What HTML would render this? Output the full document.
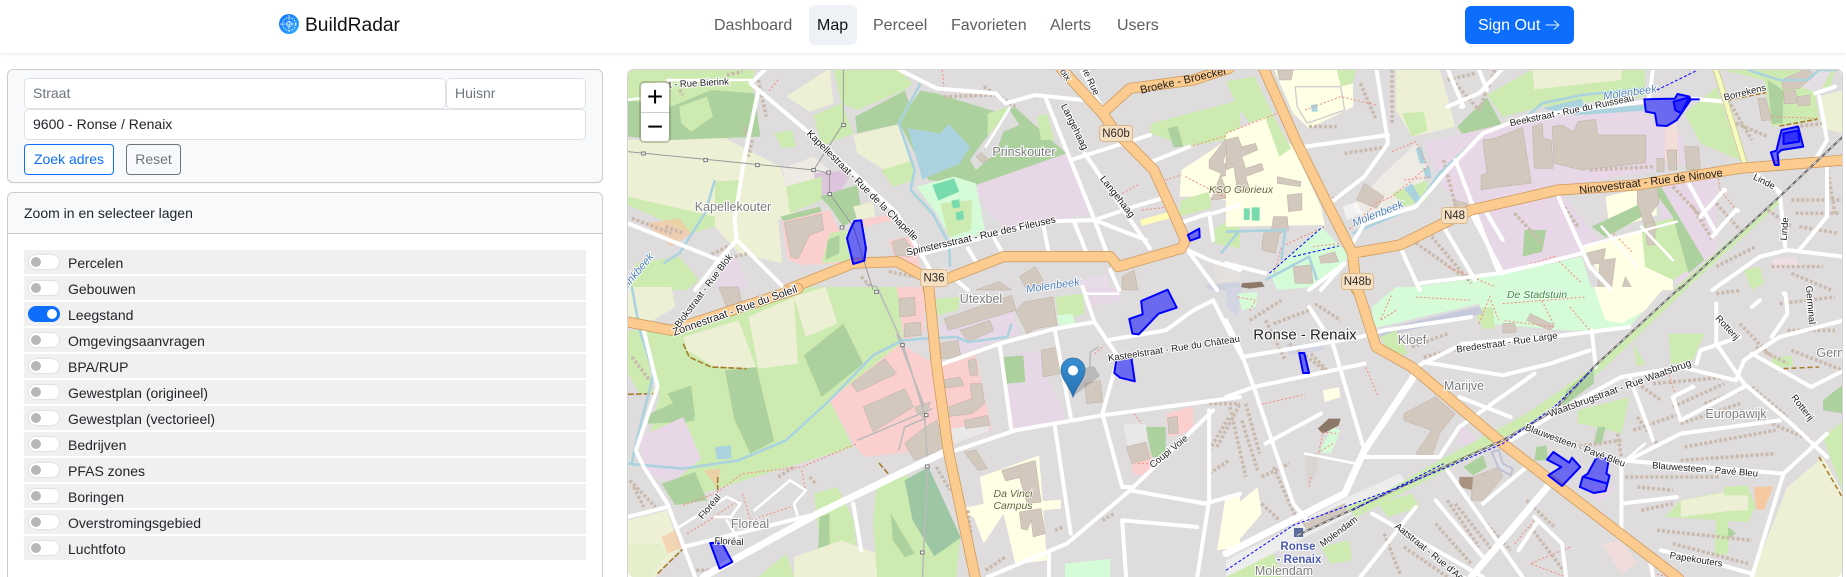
<!DOCTYPE html>
<html lang="nl"><head><meta charset="utf-8"><title>BuildRadar</title>
<style>
html,body{margin:0;padding:0;background:#fff;width:1846px;height:577px;overflow:hidden}
body{position:relative;font-family:"Liberation Sans",sans-serif;color:#212529}
#wrap{position:absolute;left:0;top:0;width:1846px;height:577px;overflow:hidden;contain:paint}
.a{position:absolute;box-sizing:border-box;white-space:nowrap}
.nav{left:0;top:0;width:1846px;height:53px;background:#fff;box-shadow:0 1px 4px rgba(0,0,0,.1)}
.nl{top:14px;font-size:16px;line-height:24px;color:#5c5f63}
.inp{background:#fff;border:1px solid #dee2e6;border-radius:5px;font-size:14px;line-height:28px;padding-left:8px;color:#6c757d}
.row{left:24px;width:562px;height:24px;background:#f0f0f0;font-size:14px;line-height:26px;padding-left:44px;color:#212529}
.sw{position:absolute;left:4px;top:4px;width:32px;height:16px;border-radius:8px;background:#fff;border:1px solid #dee2e6;box-sizing:border-box}
.sw i{position:absolute;left:2px;top:2px;width:10px;height:10px;border-radius:50%;background:#b7b7b7}
.on{background:#0d6efd;border-color:#0d6efd}.on i{left:18px;background:#fff}
svg.m{position:absolute;left:0;top:0;clip-path:inset(70px 4px 0 628px round 6px)}
svg.m *{vector-effect:non-scaling-stroke}
.w{fill:none;stroke:#fff;stroke-width:4;stroke-linecap:round;stroke-linejoin:round}
.t{fill:none;stroke:#fff;stroke-width:2.6;stroke-linecap:round;stroke-linejoin:round}
.b{fill:none;stroke:#fff;stroke-width:7;stroke-linecap:round;stroke-linejoin:round}
.oc{fill:none;stroke:#cf9b5c;stroke-width:11;stroke-linejoin:round;stroke-linecap:round}
.o{fill:none;stroke:#fbcb90;stroke-width:9.4;stroke-linejoin:round;stroke-linecap:round}
.wa{fill:none;stroke:#aad3df;stroke-width:2.6;stroke-linejoin:round}
.p{fill:none;stroke:#f58a7c;stroke-width:1;stroke-dasharray:2 2}
.r1{fill:none;stroke:#c9baad;stroke-width:3.5;stroke-dasharray:3 2}
.bd{fill:#d3c8bd;stroke:#bdafa3;stroke-width:.5}
.bl{fill:#0000ff;fill-opacity:.52;stroke:#0000ff;stroke-width:2;stroke-linejoin:round}
.rl{fill:none;stroke:#6f6f6f;stroke-width:2}
.bd2{fill:none;stroke:#0000ff;stroke-width:1;stroke-dasharray:3 2}
.f{fill:#add19e}.g{fill:#cdebb0}.y{fill:#eef0d5}.l{fill:#e8d7e6}.k{fill:#fccfcf}.h{fill:#d5fbd9}.s{fill:#ffffe5}
text{font-family:"Liberation Sans",sans-serif;text-anchor:middle;dominant-baseline:central}
.rt{font-size:10px;fill:#1c1c1c;paint-order:stroke;stroke:#fff;stroke-width:2px}
.pl{font-size:12.5px;fill:#7c7c7c;paint-order:stroke;stroke:#fff;stroke-width:2px}
.wt{font-size:11px;font-style:italic;fill:#4f7fb8;paint-order:stroke;stroke:#fff;stroke-width:1.6px}
.it{font-size:10.5px;font-style:italic;fill:#66662a;paint-order:stroke;stroke:#fff;stroke-width:1.4px}
.sh{font-size:11.5px;fill:#2c2c2c}
</style></head><body>
<div id="wrap">

<svg class="m" width="1846" height="577" viewBox="0 0 1846 577">
<rect x="620" y="60" width="1226" height="517" fill="#dfdcdd"/>

<!-- T3 areas -->
<g transform="translate(620 0) scale(.3954 .3333)">
<path class="y" d="M20 420L250 405L405 500L440 640L400 660L410 790L300 760L240 680L20 590Z"/>
<path class="g" d="M20 205L340 205L330 400L250 410L130 420L20 410Z"/>
<path class="f" d="M20 300L130 320L230 270L340 280L355 410L130 420L20 410Z"/>
<path class="g" d="M150 320L220 290L235 350L180 395L155 370Z"/>
<path class="g" d="M240 545L300 540L300 640L240 610Z"/>
<path class="g" d="M20 590L240 650L240 680L180 700L20 615Z"/>
<path class="g" d="M390 400L435 390L445 440L410 445Z"/>
<path fill="#f4c9a2" opacity=".75" d="M65 670L150 655L180 700L130 740Z"/>
<path class="g" d="M40 790L150 770L200 840L170 870L20 870Z"/>
<path class="l" d="M255 790L295 770L325 870L245 870Z"/>
<path class="y" d="M420 290L530 205L540 310L480 335Z"/>
<path class="g" d="M490 345L560 310L590 400L510 440Z"/>
<path class="g" d="M540 205L700 205L740 250L720 270L600 330L560 310Z"/>
<path class="f" d="M595 350L720 272L745 350L705 372L600 400Z"/>
<path class="y" d="M590 405L710 372L740 490L670 510L600 460Z"/>
<path class="g" d="M660 510L740 482L745 540L690 560Z"/>
<path fill="#eeebe5" d="M410 505L490 470L530 510L490 540L420 560Z"/>
<path fill="#dcc5dc" d="M490 520L590 510L560 570L500 590Z"/>
<path class="g" d="M420 560L510 530L510 600L430 640Z"/>
<path class="f" d="M505 590L600 555L612 640L565 680L530 620Z"/>
<path class="y" d="M590 620L640 605L645 650L600 660Z"/>
<path class="f" d="M405 650L505 620L510 635L415 665Z"/>
<path class="k" d="M410 665L530 630L560 705L575 790L460 795L425 780Z"/>
<path class="k" d="M600 660L680 645L690 660L620 680Z"/>
<path class="g" d="M530 700L575 690L590 782L510 790Z"/>
<path class="f" d="M525 720L555 705L555 760L520 780Z"/>
<path class="k" d="M680 720L740 710L760 800L700 795Z"/>
<path class="f" d="M705 365L760 272L800 280L950 335L1000 322L1095 425L1130 460L900 555L780 540Z"/>
<path class="g" d="M930 340L985 320L975 360L930 415Z"/>
<path class="g" d="M1055 350L1080 340L1100 420L1065 420Z"/>
<path fill="#dfdcdd" d="M925 415L985 330L1010 375L970 395L950 460L900 510L885 480Z"/>
<path fill="#aad3df" d="M728 385L810 400L832 372L885 440L860 490L780 530L765 540Z"/>
<path class="l" d="M895 560L1130 460L1195 640L1080 665L985 690L930 630Z"/>
<path class="h" d="M750 560L845 530L900 550L925 700L840 722L800 640Z"/>
<path class="g" d="M810 610L890 600L888 690L830 712Z"/>
<path fill="#77dbae" d="M790 555L845 535L858 575L805 602Z"/>
<path fill="#77dbae" d="M838 602L858 598L860 622L842 625ZM848 638L868 632L870 658L852 662Z"/>
<path class="g" d="M1345 370L1568 300L1568 410L1440 440L1340 400Z"/>
<path class="f" d="M1385 385L1410 378L1425 440L1400 442Z"/>
<path class="s" d="M1420 510L1568 395L1568 610L1490 590L1415 590Z"/>
<path class="g" d="M1420 600L1490 575L1495 625L1410 650Z"/>
<path class="g" d="M1500 690L1568 640L1568 745L1500 730Z"/>
<path class="bd" d="M1490 480L1530 420L1568 405L1568 420L1535 440L1525 490L1568 500L1568 520L1520 530L1535 575L1568 570L1568 590L1495 600L1520 520L1490 505Z"/>
<path class="bd" d="M415 668L510 642L515 690L480 705L450 778L432 770Z"/>
<path class="bd" d="M688 725L720 715L738 745L735 770L695 765Z"/>
<path class="bd" d="M900 470L915 458L932 478L918 490Z"/>
<path fill="#e4e0de" d="M1500 800L1568 780L1568 870L1520 870Z"/>
<path fill="#e8dcea" d="M1160 840L1230 825L1240 870L1170 870Z"/>
<path fill="#cdd0dd" d="M1480 855L1568 845L1568 870L1490 870Z"/>
<path class="bd" d="M1270 830L1300 810L1310 870L1270 870Z"/>
<path class="bd" d="M900 870L960 845L990 870ZM1010 830L1050 800L1080 860L1030 870Z"/>
<path class="r1" d="M150 270L160 285M270 225L310 215M335 420L325 470M315 380L320 410M350 240L370 350M220 770L280 735M30 655L130 700M115 680L160 700M820 290L950 285M920 260L1000 320M290 770L325 760M610 830L640 868M680 815L745 830"/>
<path class="p" d="M400 240L375 275M815 210L820 270M1440 440L1568 395M1380 540L1420 525M1270 580L1310 555M1320 630L1395 620M1430 530L1560 610"/>
<path fill="#fffcb8" d="M1315 660L1400 632L1405 650L1320 678Z"/>
</g>

<!-- T4 areas -->
<g transform="translate(1226 0) scale(.3954 .3333)">
<path class="g" d="M0 245L72 230L130 370L100 435L30 320Z"/>
<path class="s" d="M0 400L100 352L172 445L240 620L250 675L0 680Z"/>
<path class="g" d="M100 355L130 370L165 445L135 470Z"/>
<path class="s" d="M120 205L320 205L322 320L210 385L170 340Z"/>
<path class="g" d="M280 205L330 205L320 250L290 260Z"/>
<path class="y" d="M430 205L540 205L580 380L470 410L430 330Z"/>
<path class="g" d="M445 340L500 335L510 392L470 410Z"/>
<path class="g" d="M660 285L780 205L1060 205L1060 290L800 320L700 350Z"/>
<path class="y" d="M775 205L1000 205L1000 240L780 268Z"/>
<path class="f" d="M585 380L660 292L700 380L620 440Z"/>
<path fill="#aad3df" d="M800 325L900 295L905 325L1060 315L1060 332L900 350Z"/>
<path class="l" d="M500 430L760 355L1060 332L1090 380L1150 400L1170 490L600 620L550 560Z"/>
<path fill="#f3ddd8" d="M1110 380L1140 370L1145 490L1110 490Z"/>
<path class="g" d="M1160 340L1240 262L1300 480L1200 430Z"/>
<path class="g" d="M1240 205L1540 205L1530 260L1490 280L1500 360L1380 380L1360 240Z"/>
<path class="f" d="M1370 240L1410 272L1408 370L1380 372Z"/>
<path class="y" d="M1500 290L1560 270L1560 400L1505 382Z"/>
<path fill="#e4dfe2" d="M1400 240L1470 205L1530 215L1500 280Z"/>
<path class="l" d="M620 640L840 570L960 740L760 800L700 810Z"/>
<path class="l" d="M1090 560L1240 530L1240 770L1160 870L1130 830Z"/>
<path class="s" d="M900 740L1140 660L1130 780L1130 870L970 870Z"/>
<path class="s" d="M960 590L1085 555L1090 645L970 690Z"/>
<path class="f" d="M925 680L1050 610L1052 650L960 712Z"/>
<path class="g" d="M1050 680L1140 650L1210 780L1130 840L1060 800Z" />
<path class="f" d="M1080 570L1100 560L1210 780L1170 820L1130 650Z"/>
<path class="f" d="M755 690L810 690L800 755L750 770Z"/>
<path class="h" d="M425 870L690 825L900 770L925 870Z"/>
<path class="h" d="M110 820L240 680L290 740L320 760L230 860L130 870Z"/>
<path fill="#eeebe5" d="M320 620L400 520L480 430L510 500L480 620L350 660Z"/>
<path fill="#fff" opacity=".6" d="M295 620L330 605L345 640L305 660Z"/>
<path class="g" d="M420 580L510 540L510 600L450 620Z"/>
<path fill="#aad3df" d="M450 565L470 550L495 600L480 610ZM480 445L495 440L505 490L490 490ZM498 505L515 500L520 535L505 535Z"/>
<path class="g" d="M1310 810L1350 800L1360 850L1330 870Z"/>
<path class="g" d="M1130 870L1400 590L1410 600L1160 870Z"/>
<path fill="#ffdff0" opacity=".5" d="M1380 780L1440 770L1450 800L1390 810Z"/>
<path fill="none" stroke="#cfcfcf" stroke-width="1.4" d="M175 260L290 260L300 330L205 370L180 320Z"/>
<path fill="#aad3df" d="M215 315L230 312L232 335L217 335Z"/>
<path fill="#77dbae" d="M45 625H60V660H45ZM65 622H85V662H65Z"/>
<path class="bd" d="M650 420L680 415L750 382L772 550L682 562L645 570L645 525L660 520Z"/>
<path class="bd" d="M775 380L800 370L802 415L822 420L828 505L780 505Z"/>
<path class="bd" d="M825 380L850 375L880 395L890 365L935 358L940 405L1062 405L1062 488L900 510L830 490Z"/>
<path class="bd" d="M1115 450L1140 450L1140 510L1120 510ZM1160 440L1195 440L1200 510L1165 510ZM1090 475L1108 475L1108 515L1090 515Z"/>
<path class="bd" d="M1345 295L1365 295L1380 360L1355 362Z"/>
<path class="bd" d="M1410 275L1440 270L1445 310L1412 312ZM1445 290L1475 285L1478 315L1448 318Z"/>
<path class="bd" d="M1405 240L1470 205L1490 225L1450 265L1410 270Z"/>
<path class="bd" d="M0 420L30 410L40 440L75 430L80 450L40 470L50 505L90 490L95 510L50 530L60 570L30 580L20 500L0 510Z"/>
<path class="bd" d="M130 530L190 545L188 560L130 550ZM155 585L192 580L192 630L158 635ZM120 650L155 650L158 690L135 700L125 760L90 750L95 700L115 690Z"/>
<path class="bd" d="M575 600L610 610L620 650L580 640Z"/>
<path class="bd" d="M350 550L400 590L380 625L330 600Z"/>
<path class="bd" d="M130 210L170 210L165 240L135 240Z"/>
<path class="bd" d="M1040 560L1090 555L1095 610L1075 640L1090 690L1060 680L1040 610Z"/>
<path class="bd" d="M1060 670L1085 665L1085 735L1065 735Z"/>
<path class="bd" d="M910 760L960 745L955 780L985 775L975 870L940 870L945 790L915 795Z"/>
<path class="bd" d="M1010 830L1030 870L1000 870Z"/>
<path class="bd" d="M235 770L275 755L285 785L240 790ZM170 800L215 795L220 850L175 850Z"/>
<path fill="#8d7a6a" d="M40 850L90 845L98 860L60 866L38 862Z"/>
<path class="r1" d="M1270 300L1330 420M1290 370L1370 410M1440 380L1510 370M1320 500L1420 490M1520 500L1540 640M1180 620L1230 720M1240 610L1300 690M920 510L1080 500M550 480L590 660M520 710L620 850M730 640L800 730M820 560L890 680M1430 600L1560 600M1440 640L1550 640M1450 680L1550 700M1370 630L1430 680M340 250L380 360M420 210L420 370M560 240L630 220M580 250L640 330M640 330L680 210M210 380L280 380M300 460L410 440M470 720L600 830M1130 560L1210 660M1240 800L1340 740M1380 800L1510 800M1430 820L1530 870"/>
<path class="p" d="M200 330L290 290L380 315M0 400L130 340M420 455L480 425L510 500L420 590L380 610L310 690M450 540L520 530M1240 500L1250 570L1290 630M1380 350L1500 355M260 600L320 560M980 700L1030 760M750 800L830 770L900 850M120 830L140 740L250 680M220 740L290 730M560 800L700 870"/>
<path fill="none" stroke="#a87a2a" stroke-width="1.6" stroke-dasharray="5 2" d="M1270 300L1365 278M1400 378L1495 358"/>
</g>

<!-- T5 areas -->
<g transform="translate(620 287) scale(.3954 .3333)">
<path class="g" d="M20 130L130 135L480 0L700 0L720 190L530 340L590 480L300 585L150 640L100 560L60 530L100 320L60 130Z"/>
<path class="y" d="M160 150L300 100L345 245L240 240L170 190Z"/>
<path class="y" d="M325 90L440 30L450 230L350 245Z"/>
<path class="y" d="M440 28L520 0L550 110L470 150Z"/>
<path class="f" d="M265 250L345 240L390 462L330 500L290 400Z"/>
<path class="f" d="M465 205L565 110L615 230L510 330Z"/>
<path class="f" d="M75 380L150 340L190 400L165 405L70 410Z"/>
<path class="f" d="M120 320L180 295L190 390L160 400Z"/>
<path class="l" d="M50 450L160 390L205 515L130 590L60 550Z"/>
<path fill="#aad3df" d="M240 480L280 475L282 515L245 518Z"/>
<path fill="#f4c9a2" opacity=".8" d="M212 550L255 545L245 600Z"/>
<path class="f" d="M105 590L190 555L220 640L140 655Z"/>
<path class="y" d="M20 0L130 0L140 60L55 120L20 95Z"/>
<path class="g" d="M20 130L60 130L85 320L50 320L20 260Z"/>
<path class="y" d="M20 700L120 670L150 790L110 840L90 870L20 870Z"/>
<path fill="#f4c9a2" opacity=".7" d="M105 750L140 730L160 780L120 800Z"/>
<path class="g" d="M20 770L100 770L120 800L80 870L20 870Z" opacity=".25"/>
<path class="k" d="M530 340L710 170L770 130L770 0L700 0L720 170Z"/>
<path class="k" d="M530 340L710 170L800 235L830 480L620 510L590 470Z"/>
<path class="k" d="M803 240L900 205L940 430L840 472Z"/>
<path class="g" d="M800 35L860 30L855 70L800 85Z"/>
<path class="l" d="M800 120L990 60L1010 140L860 200Z"/>
<path class="g" d="M1100 30L1170 20L1175 80L1110 100Z"/>
<path class="h" d="M1105 85L1145 80L1150 112L1110 115Z"/>
<path class="l" d="M1175 0L1260 0L1265 40L1185 60Z"/>
<path class="g" d="M490 620L550 600L590 700L600 790L510 810Z"/>
<path class="f" d="M505 690L530 680L530 800L500 810Z"/>
<path class="y" d="M440 810L560 760L650 800L650 870L440 870Z"/>
<path class="g" d="M350 870L420 800L440 870ZM650 590L725 565L860 760L850 870L650 870L640 700Z"/>
<path fill="#9cc6a4" d="M720 580L780 540L862 752L795 808L740 700Z"/>
<path class="f" d="M685 680L745 800L720 810L690 760Z"/>
<path class="s" d="M910 570L1060 505L1080 820L1000 832L970 680L920 770L885 660L920 650Z"/>
<path class="s" d="M870 660L1115 638L1115 665L880 690Z"/>
<path class="bd" d="M965 550L1050 520L1065 645L1030 650L1010 572L975 582Z"/>
<path class="bd" d="M1010 675L1065 665L1075 740L1045 750L1040 700L1030 730L1015 725Z"/>
<path fill="#e8d7e6" d="M975 310L1065 240L1130 400L990 430Z"/>
<path class="l" d="M975 210L1065 190L1075 270L990 310Z" />
<path class="f" d="M970 210L1020 205L1025 285L975 290Z"/>
<path class="k" d="M1290 500L1345 500L1340 560L1300 565Z"/>
<path class="k" d="M1380 380L1450 358L1450 430L1390 450Z"/>
<path class="f" d="M1330 420L1380 420L1380 510L1345 510Z"/>
<path fill="#e8e8e8" d="M1272 410L1330 410L1335 480L1285 480Z"/>
<path fill="#e8e8e8" d="M835 425L930 410L935 430L845 470Z"/>
<path class="bd" d="M1280 480L1330 465L1340 515L1295 530Z"/>
<path class="bd" d="M1385 392L1410 388L1412 438L1388 440Z"/>
<path class="h" d="M1125 830L1240 815L1240 870L1125 870Z"/>
<path class="s" d="M1530 640L1568 620L1568 780L1510 790Z"/>
<path class="bd" d="M1065 190L1110 180L1115 260L1070 270Z"/>
<path class="bd" d="M1175 290L1215 280L1220 345L1180 350Z"/>
<path class="bd" d="M585 290L670 215L700 260L600 315Z"/>
<path class="bd" d="M615 360L720 305L742 360L640 435Z"/>
<path class="bd" d="M745 360L785 345L770 395L750 375ZM820 365L890 335L885 290L915 290L922 350L890 380L822 390Z"/>
<path class="bd" d="M810 280L860 270L870 295L815 305ZM880 220L900 215L905 265L885 265Z"/>
<path class="bd" d="M870 400L930 385L935 415L875 425Z"/>
<path class="bd" d="M720 470L760 430L800 400L830 470L800 495L745 520Z"/>
<path class="bd" d="M805 170L855 160L862 210L812 215ZM705 35L745 30L748 85L708 90ZM720 110L760 105L762 145L718 150Z"/>
<path class="bd" d="M820 95L990 25L1002 70L1022 45L1095 30L1105 115L1050 125L1030 140L1000 70L830 130Z"/>
<path class="bd" d="M860 130L935 100L945 130L880 165Z"/>
<path class="bd" d="M870 495L900 490L930 545L905 550Z"/>
<path class="bd" d="M250 0L300 0L310 60L270 60Z"/>
<path class="r1" d="M30 210L75 280M25 580L90 660M35 600L60 660M180 850L240 850M400 570L440 540M1490 490L1540 390M1510 480L1568 350M1490 560L1540 520M1490 350L1568 350M1220 700L1250 680M880 670L890 780M925 850L975 810M1100 730L1120 720M800 540L835 610M480 570L495 590"/>
<path class="p" d="M160 655L240 620L310 560L460 540L600 470M170 740L225 700L300 640M310 620L330 700L430 660M460 550L470 620M1200 200L1225 175M1300 380L1320 410M1310 530L1340 530"/>
<path fill="none" stroke="#a87a2a" stroke-width="1.6" stroke-dasharray="6 2" d="M160 170L175 210L230 240L320 245M20 322L85 320M95 860L160 785M655 528L678 560M247 570L247 610"/>
<path fill="none" stroke="#bbb" stroke-width="1.6" d="M700 140L770 360M600 460L790 365M705 490L720 420L770 395M1188 240L1190 195L1210 180M620 -10L650 0L715 170L770 380L778 540L765 870"/>
</g>

<!-- T6 areas -->
<g transform="translate(1226 287) scale(.3954 .3333)">
<path class="h" d="M370 125L640 50L660 110L860 130L920 130L1020 120L1110 0L430 0L370 60Z"/>
<path class="s" d="M930 0L1110 0L1060 70L1000 110L960 100Z"/>
<path class="g" d="M625 65L675 60L680 125L650 125Z"/>
<path fill="#c7cadd" d="M380 130L640 58L650 80L390 150Z"/>
<path fill="#d3d5e2" d="M150 170L250 172L245 190L160 205Z"/>
<path fill="#d3d5e2" d="M0 0L40 0L30 90L0 60Z"/>
<path class="h" d="M30 20L80 15L75 60L40 70Z"/>
<path class="g" d="M390 150L430 130L460 200L420 210Z"/>
<path class="g" d="M1120 140L1210 140L1180 220L1125 232Z"/>
<path class="g" d="M890 370L1020 330L1000 440L940 420L890 410Z"/>
<path class="f" d="M940 420L960 420L950 470L930 470Z"/>
<path class="g" d="M1030 170L1060 230L1040 240Z"/>
<path class="g" d="M1150 640L1320 600L1340 660L1320 705L1110 690Z"/>
<path class="f" d="M1250 700L1290 740L1250 770L1240 800Z"/>
<path class="g" d="M1240 700L1270 690L1270 800L1235 805Z"/>
<path fill="#f4c9a2" d="M1335 600L1385 598L1360 670L1340 665Z"/>
<path class="y" d="M1150 640L1320 605L1320 670L1270 672L1150 690Z"/>
<path class="g" d="M1260 600L1320 595L1320 625L1260 625Z"/>
<path class="y" d="M1330 870L1420 600L1510 510L1563 625L1563 870Z"/>
<path class="g" d="M1510 450L1563 400L1563 620L1525 500Z"/>
<path class="f" d="M1510 340L1563 290L1563 380L1510 370Z"/>
<path class="g" d="M1380 215L1430 205L1435 240L1385 240Z"/>
<path class="s" d="M0 680L80 600L90 680L40 750L0 780Z"/>
<path class="s" d="M245 310L285 300L290 330L250 345Z"/>
<path fill="#e8d7e6" d="M900 590L990 600L940 650Z"/>
<path fill="#f1dcdc" d="M950 770L1000 760L1040 830L1000 860Z"/>
<path fill="#e8d7e6" d="M590 400L640 470L590 470Z"/>
<path class="f" d="M600 540L650 505L660 540L625 565Z"/>
<path class="f" d="M785 480L810 475L815 520L780 520Z"/>
<path class="g" d="M385 650L470 620L490 660L410 690Z"/>
<path class="h" d="M235 495L270 420L290 430L265 500Z"/>
<path class="g" d="M240 780L310 760L320 820L265 830Z"/>
<path class="g" d="M0 860L120 800L140 870L0 870Z"/>
<path fill="#ededed" d="M0 820L150 730L290 640L440 560L460 590L320 680L0 870Z"/>
<path class="g" d="M300 660L400 615L540 520L760 380L930 240L1150 0L1170 0L950 250L780 400L540 560L410 640L330 690Z"/>
<path class="f" d="M860 310L930 240L930 290L850 360Z"/>
<path fill="#d9d5d3" d="M200 510L240 490L225 570L205 600Z"/>
<path class="bd" d="M450 380L530 330L580 380L540 440L520 510L480 500L520 430L450 400Z"/>
<path class="bd" d="M590 570L625 570L625 610L590 600Z" style="fill:#a89380"/>
<path fill="#8c7768" d="M232 425L260 395L290 395L285 415L245 440Z"/>
<path class="bd" d="M625 570L690 540L700 570L650 640L620 640Z"/>
<path class="bd" d="M700 110L730 108L735 135L700 138ZM770 80L830 115L820 130L760 100Z"/>
<path fill="#e0dfe6" stroke="#bfc0d4" stroke-width="2" d="M672 495L690 490L700 530L725 545L720 565L690 545Z"/>
<path fill="#5b6aa0" d="M172 723H195V750H172Z"/>
<path class="bd" d="M195 710L300 650L305 670L205 730Z"/>
<path class="r1" d="M50 350L85 500M100 100L150 220M120 110L210 70M160 170L250 250M215 200L255 250M40 400L80 550M10 360L50 570M90 570L160 530M120 540L180 700M90 650L135 700M470 180L560 140M500 210L640 170M60 100L140 40M225 50L290 100M650 700L720 790M560 640L640 780M530 710L620 830M580 650L680 800M450 780L560 870M400 740L440 860M1040 600L1130 610M1030 430L1150 380M1040 390L1090 470M1160 480L1390 430M1150 520L1390 500M1010 570L1250 570M1030 280L1100 340M1080 290L1270 270M1130 360L1260 290M1210 350L1300 310M1150 410L1300 350M880 480L1000 460M990 440L1000 510M1300 370L1480 460M1330 300L1420 390M1300 110L1380 210M1340 180L1420 230M1420 130L1540 130M1430 190L1560 250M1240 20L1300 10M1090 730L1330 760M1130 770L1320 830M1050 670L1130 650M760 640L830 720M770 720L860 860M1400 50L1540 30"/>
<path class="p" d="M80 355L200 322M350 230L385 330M210 600L215 570M270 470L235 495L245 435L285 440M430 70L390 100L420 20M670 40L690 100M480 30L620 40M700 50L910 30M870 60L920 130M640 110L670 20M790 20L830 115M830 120L700 100M30 30L75 40L60 70M1115 240L1135 320M730 770L780 700M870 780L770 830L860 870M1080 860L1130 870"/>
<path fill="none" stroke="#a87a2a" stroke-width="1.5" stroke-dasharray="5 3" d="M1500 510L1563 640M1410 245L1500 240"/>
</g>

<!-- water -->
<g transform="translate(620 0) scale(.3954 .3333)">
<path class="wa" d="M760 250L705 370L745 510L735 570L790 640L832 730L835 800"/>
<path class="wa" d="M240 540L215 640L150 760L110 790"/>
<path class="wa" d="M1520 760L1568 690"/>
</g>
<g transform="translate(1226 0) scale(.3954 .3333)">
<path class="wa" d="M320 700L480 620L540 520L650 400L760 350L800 310L900 285L1060 265M1320 210L1400 240L1470 240L1500 210L1560 210"/>
<path class="wa" d="M0 695L150 690L140 780M100 840L210 770L230 840"/>
</g>
<g transform="translate(620 287) scale(.3954 .3333)">
<path class="wa" d="M20 530L160 545L300 520L420 460L530 340L640 205L715 160L770 155L850 150L880 165L980 150L990 110"/>
<path class="wa" d="M30 0L50 130L85 260L40 470L30 530"/>
</g>

<!-- roads T3 -->
<g transform="translate(620 0) scale(.3954 .3333)">
<path class="w" d="M330 250L500 420L610 540L700 640L760 760L795 830M330 250L370 205M350 270L315 470L290 660L295 720L250 780L20 670M295 720L420 870M250 780L190 870"/>
<path class="w" d="M700 205L800 265L950 280L975 310L1050 285L1170 300M1075 290L1200 660L1235 770M1175 460L1340 745M1140 480L1340 405M770 760L1070 665L1200 660L1330 720M1200 660L1300 620L1385 590M880 745L905 795M940 700L972 770M1070 670L1085 765M1150 670L1182 765M1335 490L1440 440M1415 670L1490 640L1500 720M1435 750L1490 780L1568 810M1435 750L1510 870M1240 810L1262 870M880 870L820 810M1500 640L1568 615"/>
<path class="t" d="M20 300L50 295M120 240L330 240M925 440L985 325M1165 210L1220 320"/>
<path class="oc" d="M425 868L590 790L700 785L770 830L830 835L970 770L1240 770L1260 800L1420 745L1430 720L1400 640L1350 510L1250 390L1220 340L1115 205"/>
<path class="oc" d="M1220 340L1290 265L1450 240L1540 205"/>
<path class="oc" d="M780 830L780 870"/>
<path class="o" d="M425 868L590 790L700 785L770 830L830 835L970 770L1240 770L1260 800L1420 745L1430 720L1400 640L1350 510L1250 390L1220 340L1115 205"/>
<path class="o" d="M1220 340L1290 265L1450 240L1540 205"/>
<path class="o" d="M780 830L780 870"/>
<path fill="none" stroke="#9a9a9a" stroke-width="1" d="M20 455L490 510L565 370L565 205M490 510L530 520L530 580L590 680L640 870"/>
<g fill="#fff" stroke="#777" stroke-width="1"><rect x="55" y="456" width="9" height="9"/><rect x="212" y="476" width="9" height="9"/><rect x="343" y="491" width="9" height="9"/><rect x="485" y="506" width="9" height="9"/><rect x="523" y="513" width="9" height="9"/><rect x="526" y="578" width="9" height="9"/><rect x="561" y="371" width="9" height="9"/><rect x="557" y="678" width="9" height="9"/></g>
</g>

<!-- roads T4 -->
<g transform="translate(1226 0) scale(.3954 .3333)">
<path class="w" d="M380 205L410 430L350 530L260 612M200 440L410 405M560 205L600 320M560 320L640 280L700 205M640 210L660 270M320 730L350 670L480 620L560 510L650 400L760 350L1060 305M1170 295L1260 305"/>
<path class="w" d="M580 480L690 820M840 590L920 800L975 870M1340 520L1400 575L1415 750M1170 550L1240 700M1200 650L1260 570M1230 710L1290 630M1490 280L1540 260M1500 290L1520 420L1490 480M1520 500L1520 650L1450 750M1230 870L1350 770L1420 750L1560 770M210 870L300 790M440 740L490 870M550 680L630 840M620 640L700 820M660 640L700 720M490 850L690 820L800 790L900 760M100 820L0 790M300 790L240 870M1080 205L1070 295"/>
<path class="t" d="M900 740L1140 665M950 680L1040 800M1050 680L1130 780"/>
<circle cx="596" cy="320" r="7" fill="#fff"/><circle cx="1260" cy="570" r="7" fill="#fff"/><circle cx="1293" cy="632" r="7" fill="#fff"/><circle cx="1397" cy="575" r="7" fill="#fff"/>
<path fill="none" stroke="#c9c97a" stroke-width="6" d="M1238 205L1312 492"/>
<path fill="none" stroke="#f7fabf" stroke-width="4.5" d="M1238 205L1312 492"/>
<path class="oc" d="M95 205L180 430L260 620L320 760L330 870"/>
<path class="oc" d="M320 760L440 735L550 670L620 630L840 570L1040 555L1300 505L1565 480"/>
<path class="o" d="M95 205L180 430L260 620L320 760L330 870"/>
<path class="o" d="M320 760L440 735L550 670L620 630L840 570L1040 555L1300 505L1565 480"/>
<path class="rl" d="M1145 870L1400 590L1560 410"/>
<path fill="none" stroke="#fff" stroke-width=".8" stroke-dasharray="4 4" d="M1145 870L1400 590L1560 410"/>
<path class="bd2" d="M110 820L240 685M170 770L285 738M1090 270L1190 212"/>
</g>

<!-- roads T5 -->
<g transform="translate(620 287) scale(.3954 .3333)">
<path class="w" d="M805 235L960 170L1100 125L1200 105M960 170L990 430M1100 130L1140 390M1170 0L1200 105L1260 210L1220 380L1270 600L1290 600M1230 160L1380 130L1450 70L1500 40M850 490L1000 430L1220 385L1568 330"/>
<path class="w" d="M930 870L1130 770L1290 610L1500 370M1490 370L1490 640L1460 870M1290 610L1480 650L1568 620M1270 700L1460 720M1100 420L1140 740M1085 800L1085 870M1270 700L1280 870M1500 40L1568 200M160 780L500 680M590 650L610 790"/>
<path class="w" d="M60 130L95 300L40 490L60 540L120 650L190 870M20 690L120 660"/>
<path class="t" d="M150 720L270 630L305 650L280 690L240 690M270 700L300 760M340 670L430 580L470 610L440 650L450 690M1180 20L1260 20"/>
<path class="b" d="M210 870L500 680L830 490"/>
<path class="oc" d="M780 -10L800 230L830 490L900 880"/>
<path class="oc" d="M20 105L130 130L450 5"/>
<path class="o" d="M780 -10L800 230L830 490L900 880"/>
<path class="o" d="M20 105L130 130L450 5"/>
<g fill="#fff" stroke="#777" stroke-width="1"><rect x="644" y="10" width="9" height="9"/><rect x="710" y="170" width="9" height="9"/><rect x="770" y="380" width="9" height="9"/><rect x="773" y="534" width="9" height="9"/><rect x="760" y="792" width="9" height="9"/></g>
</g>

<!-- roads T6 -->
<g transform="translate(1226 287) scale(.3954 .3333)">
<path class="b" d="M0 800L300 620L350 490L480 260"/>
<path class="b" d="M820 590L620 870"/>
<path class="w" d="M350 490L270 170L210 60M40 210L340 150L400 130L620 90M480 240L600 170L820 150L1020 120M500 225L700 265L820 230L920 190M70 300L350 230M70 300L170 650L205 700M0 330L70 300L30 170L0 100M100 470L240 380M540 510L350 510M540 510L590 420L780 260M590 330L720 390M560 550L750 870M650 650L760 540M370 680L650 870M530 640L650 810M480 660L340 870M925 130L935 240"/>
<path class="w" d="M720 460L860 360L1000 270L1150 240L1290 280M1020 270L1080 460M1000 530L1150 440L1400 400M1000 520L1410 560M1000 530L1000 730M1000 650L1140 630M1410 560L1330 870M1310 290L1240 170L1240 50M1310 300L1150 400L1130 330L1180 300M1310 290L1420 400L1520 510M1400 150L1563 100M1330 200L1480 300L1563 250M1290 280L1310 220L1400 150M1190 230L1200 190L1300 150M1330 60L1350 40M1415 20L1420 80L1380 150M1520 440L1410 560M1100 790L1240 830L1330 860M1070 800L1080 870M780 690L850 770L860 870M740 790L790 700"/>
<path class="t" d="M200 500L330 530M1000 530L1060 470"/>
<circle cx="1180" cy="300" r="7" fill="#fff"/><circle cx="1412" cy="20" r="7" fill="#fff"/>
<path class="oc" d="M330 -5L380 180L470 240L700 470L1145 875"/>
<path class="o" d="M330 -5L380 180L470 240L700 470L1145 875"/>
<path class="rl" d="M180 745L550 540L700 460L830 370L930 240L1150 0"/>
<path fill="none" stroke="#fff" stroke-width=".8" stroke-dasharray="4 4" d="M180 745L550 540L700 460L830 370L930 240L1150 0"/>
<path class="bd2" d="M0 850L170 715L440 600L700 470L830 360L925 250M320 670L550 530"/>
</g>

<!-- building polygons (blue) -->
<g transform="translate(620 0) scale(.3954 .3333)">
<path class="bl" d="M593 663L610 661L622 745L618 782L590 792L574 715L582 690Z"/>
<path class="bl" d="M1436 705L1465 686L1466 712L1442 722Z"/>
</g>
<g transform="translate(1226 0) scale(.3954 .3333)">
<path class="bl" d="M1058 298L1135 296L1142 282L1172 290L1175 300L1140 360L1115 378L1090 376L1085 340L1062 335Z"/>
<path class="bl" d="M1132 305L1172 292L1152 340L1136 330Z"/>
<path class="bl" d="M1405 390L1447 380L1460 440L1405 450L1395 460L1398 495L1388 495L1378 457L1392 452Z"/>
<path class="bl" d="M1410 400L1447 392L1450 425L1410 432Z"/>
<path d="M1172 298H1198" stroke="#00f" stroke-width="2" fill="none"/>
</g>
<g transform="translate(620 287) scale(.3954 .3333)">
<path class="bl" d="M1318 42L1385 8L1408 62L1362 80L1312 142L1296 140L1288 96L1322 82Z"/>
<path class="bl" d="M1256 215L1293 210L1302 283L1265 272L1250 258Z"/>
<path class="bl" d="M228 768L258 768L284 825L252 845Z"/>
</g>
<g transform="translate(1226 287) scale(.3954 .3333)">
<path class="bl" d="M198 198L185 198L195 258L210 258Z"/>
<path class="bl" d="M828 495L812 518L848 540L815 565L850 597L896 540L875 512L868 527Z"/>
<path class="bl" d="M940 505L968 518L962 560L970 566L960 612L930 618L895 600L902 570L915 560Z"/>
<path d="M905 570L965 590" stroke="#00f" stroke-width="2" fill="none"/>
</g>

<!-- shields -->
<g fill="#f7e0c2" stroke="#d9b98c" stroke-width="1">
<rect x="1099.5" y="125.5" width="33" height="16" rx="3"/><rect x="920.5" y="269.5" width="27" height="17" rx="3"/>
<rect x="1441.5" y="207.5" width="26" height="16" rx="3"/><rect x="1341.5" y="273.5" width="32" height="16" rx="3"/>
</g>
<text class="sh" x="1116" y="134">N60b</text><text class="sh" x="934" y="278.5">N36</text><text class="sh" x="1454.5" y="216">N48</text><text class="sh" x="1357.5" y="282">N48b</text>

<!-- road labels -->
<text class="rt" style="font-size:10.8px" transform="translate(735 311) rotate(-19.6)">Zonnestraat - Rue du Soleil</text>
<text class="rt" transform="translate(862 186) rotate(44.7)">Kapellestraat - Rue de la Chapelle</text>
<text class="rt" transform="translate(981 236.5) rotate(-12.6)">Spinstersstraat - Rue des Fileuses</text>
<text class="rt" style="font-size:11px;stroke:none" transform="translate(1183 81) rotate(-13)">Broeke - Broeckel</text>
<text class="rt" transform="translate(1074 127) rotate(64)">Langehaag</text>
<text class="rt" transform="translate(1117 197) rotate(52)">Langehaag</text>
<text class="rt" style="font-size:9.5px" transform="translate(692 84) rotate(-3)">raat - Rue Bierink</text>
<text class="rt" style="font-size:9.5px" transform="translate(704 291) rotate(-53)">Blokstraat - Rue Blok</text>
<text class="rt" style="font-size:9.5px" transform="translate(1572 111) rotate(-11.7)">Beekstraat - Rue du Ruisseau</text>
<text class="wt" transform="translate(1630 93) rotate(-8)">Molenbeek</text>
<text class="wt" transform="translate(1378 214) rotate(-22)">Molenbeek</text>
<text class="wt" transform="translate(1053 286) rotate(-8)">Molenbeek</text>
<text class="wt" transform="translate(635 275) rotate(-50)">Bijlinkbeek</text>
<text class="rt" style="font-size:11px;stroke:none" transform="translate(1651 182) rotate(-7)">Ninovestraat - Rue de Ninove</text>
<text class="rt" style="font-size:9.5px" transform="translate(1745 93) rotate(-14)">Borrekens</text>
<text class="rt" style="font-size:9.5px" transform="translate(1764 182) rotate(27)">Linde</text>
<text class="rt" style="font-size:9.5px" transform="translate(1785 229) rotate(-85)">Linde</text>
<text class="rt" style="font-size:9.5px" transform="translate(1174 349) rotate(-8.5)">Kasteelstraat - Rue du Château</text>
<text class="rt" style="font-size:9.5px" transform="translate(1169 452) rotate(-39)">Coupi Voie</text>
<text class="rt" style="font-size:9.5px" transform="translate(710 507) rotate(-50)">Floréal</text>
<text class="rt" style="font-size:9.5px" transform="translate(729 542) rotate(3)">Floréal</text>
<text class="rt" style="font-size:9.5px" transform="translate(1507 343) rotate(-8)">Bredestraat - Rue Large</text>
<text class="rt" transform="translate(1620 389) rotate(-20)">Waatsbrugstraat - Rue Waatsbrug</text>
<text class="rt" style="font-size:9.5px" transform="translate(1575 446) rotate(20.5)">Blauwesteen - Pavé Bleu</text>
<text class="rt" style="font-size:9.5px" transform="translate(1705 470) rotate(4.5)">Blauwesteen - Pavé Bleu</text>
<text class="rt" style="font-size:9.5px" transform="translate(1727 328) rotate(47)">Rotterij</text>
<text class="rt" style="font-size:9.5px" transform="translate(1802 408) rotate(52)">Rotterij</text>
<text class="rt" style="font-size:9.5px" transform="translate(1810 305) rotate(85)">Germinal</text>
<text class="rt" style="font-size:9.5px" transform="translate(1339 532) rotate(-37)">Molendam</text>
<text class="rt" style="font-size:9.5px" transform="translate(1430 553) rotate(39)">Aatstraat - Rue d'Aat</text>
<text class="rt" style="font-size:9.5px" transform="translate(1696 560) rotate(9)">Papekouters</text>
<text class="rt" style="font-size:9.5px" transform="translate(1090 81) rotate(65)">ffe Rue</text>
<text class="rt" style="font-size:9.5px" transform="translate(1065 75) rotate(55)">oix</text>

<!-- place labels -->
<text class="pl" x="1024" y="152">Prinskouter</text>
<text class="pl" x="733" y="207">Kapellekouter</text>
<text class="pl" x="981" y="299">Utexbel</text>
<text class="pl" x="750" y="524">Floréal</text>
<text class="pl" x="1464" y="386">Marijve</text>
<text class="pl" x="1412" y="340">Kloef</text>
<text class="pl" x="1736" y="414">Europawijk</text>
<text class="pl" x="1832" y="353">Germ</text>
<text class="pl" x="1284" y="571">Molendam</text>
<text x="1305" y="335" style="font-size:15px;fill:#222;paint-order:stroke;stroke:#fff;stroke-width:2px">Ronse - Renaix</text>
<text x="1298" y="547" style="font-size:11.5px;font-weight:bold;fill:#4a5ab0;paint-order:stroke;stroke:#fff;stroke-width:2px">Ronse</text>
<text x="1299" y="560" style="font-size:11.5px;font-weight:bold;fill:#4a5ab0;paint-order:stroke;stroke:#fff;stroke-width:2px">- Renaix</text>
<text class="it" x="1013" y="494">Da Vinci</text><text class="it" x="1013" y="506">Campus</text>
<text class="it" x="1241" y="190">KSO Glorieux</text>
<text class="it" style="fill:#2f8a3a" x="1537" y="295">De Stadstuin</text>

<!-- marker shadow & pin -->
<path d="M1074 396L1100 376L1094 366L1084 368Z" fill="#000" opacity=".16"/>
<defs><linearGradient id="pg" x1="0" y1="0" x2="0" y2="1"><stop offset="0" stop-color="#3a8fd0"/><stop offset="1" stop-color="#2472b4"/></linearGradient></defs>
<path d="M1073 397C1069 385 1061 379 1061 370A12 12 0 0 1 1085 370C1085 379 1077 385 1073 397Z" fill="url(#pg)" stroke="#2a6ea5" stroke-width=".8"/>
<circle cx="1073" cy="370.5" r="5" fill="#fff"/>
</svg>

<!-- map border -->
<div class="a" style="left:627px;top:69px;width:1216px;height:520px;border:1px solid #d3d3d3;border-radius:6px"></div>

<!-- zoom control -->
<div class="a" style="left:639px;top:81px;width:32px;height:62px;background:#fff;border:2px solid rgba(80,80,50,.28);border-radius:5px;background-clip:padding-box">
<div class="a" style="left:0;top:0;width:28px;height:30px;border-bottom:1px solid #ccc;font:normal 28px/28px 'Liberation Sans',sans-serif;text-align:center;color:#000">+</div>
<div class="a" style="left:0;top:30px;width:28px;height:28px;font:normal 28px/28px 'Liberation Sans',sans-serif;text-align:center;color:#000">&minus;</div>
</div>

<!-- navbar -->
<div class="a nav"></div>
<svg class="a" style="left:279px;top:14px" width="20" height="20" viewBox="0 0 20 20">
<defs><linearGradient id="lg" x1="0" y1="0" x2="1" y2="1"><stop offset="0" stop-color="#0d6efd"/><stop offset="1" stop-color="#35b0ff"/></linearGradient></defs>
<circle cx="10" cy="10" r="10" fill="url(#lg)"/>
<g fill="none" stroke="#fff" stroke-opacity=".75" stroke-width="1"><circle cx="10" cy="10" r="6.5" stroke-dasharray="2 1"/><circle cx="10" cy="10" r="2.5"/><path d="M10 1V19M1 10H19" stroke-dasharray="2 1"/></g>
</svg>
<div class="a" style="left:305px;top:14px;font-size:19.2px;line-height:24px;color:#111">BuildRadar</div>
<div class="a" style="left:809px;top:5px;width:48px;height:40px;background:#eef1f6;border-radius:6px"></div>
<div class="a nl" style="left:714px">Dashboard</div>
<div class="a nl" style="left:817px;color:#111">Map</div>
<div class="a nl" style="left:873px">Perceel</div>
<div class="a nl" style="left:951px">Favorieten</div>
<div class="a nl" style="left:1050px">Alerts</div>
<div class="a nl" style="left:1117px">Users</div>
<div class="a" style="left:1465px;top:6px;width:109px;height:38px;background:#0d6efd;border-radius:6px"></div>
<div class="a" style="left:1478px;top:14px;font-size:16px;line-height:24px;color:#fff">Sign Out</div>
<svg class="a" style="left:1545px;top:19px" width="15" height="12" viewBox="0 0 15 12"><path d="M0.5 6H13.5M9 1.5L13.8 6L9 10.5" fill="none" stroke="#fff" stroke-opacity=".85" stroke-width="1.1"/></svg>

<!-- address panel -->
<div class="a" style="left:7px;top:69px;width:596px;height:114px;background:#f8f9fa;border:1px solid #ccc;border-radius:6px;box-shadow:0 1px 1px rgba(0,0,0,.04)"></div>
<div class="a inp" style="left:24px;top:78px;width:422px;height:31px">Straat</div>
<div class="a inp" style="left:446px;top:78px;width:140px;height:31px">Huisnr</div>
<div class="a inp" style="left:24px;top:109px;width:562px;height:31px;color:#212529">9600 - Ronse / Renaix</div>
<div class="a" style="left:24px;top:144px;width:90px;height:31px;border:1px solid #0d6efd;border-radius:4px;color:#0d6efd;font-size:14px;line-height:29px;text-align:center;background:#fff">Zoek adres</div>
<div class="a" style="left:126px;top:144px;width:55px;height:31px;border:1px solid #6c757d;border-radius:4px;color:#6c757d;font-size:14px;line-height:29px;text-align:center">Reset</div>

<!-- layers panel -->
<div class="a" style="left:7px;top:192px;width:596px;height:400px;background:#fff;border:1px solid #ccc;border-radius:6px"></div>
<div class="a" style="left:8px;top:193px;width:594px;height:41px;background:#f8f9fa;border-bottom:1px solid #ccc;border-radius:5px 5px 0 0;font-size:14px;line-height:41px;padding-left:16px">Zoom in en selecteer lagen</div>

<div class="a row" style="top:250px"><span class="sw"><i></i></span>Percelen</div>
<div class="a row" style="top:276px"><span class="sw"><i></i></span>Gebouwen</div>
<div class="a row" style="top:302px"><span class="sw on"><i></i></span>Leegstand</div>
<div class="a row" style="top:328px"><span class="sw"><i></i></span>Omgevingsaanvragen</div>
<div class="a row" style="top:354px"><span class="sw"><i></i></span>BPA/RUP</div>
<div class="a row" style="top:380px"><span class="sw"><i></i></span>Gewestplan (origineel)</div>
<div class="a row" style="top:406px"><span class="sw"><i></i></span>Gewestplan (vectorieel)</div>
<div class="a row" style="top:432px"><span class="sw"><i></i></span>Bedrijven</div>
<div class="a row" style="top:458px"><span class="sw"><i></i></span>PFAS zones</div>
<div class="a row" style="top:484px"><span class="sw"><i></i></span>Boringen</div>
<div class="a row" style="top:510px"><span class="sw"><i></i></span>Overstromingsgebied</div>
<div class="a row" style="top:536px"><span class="sw"><i></i></span>Luchtfoto</div>
</div>
</body></html>
